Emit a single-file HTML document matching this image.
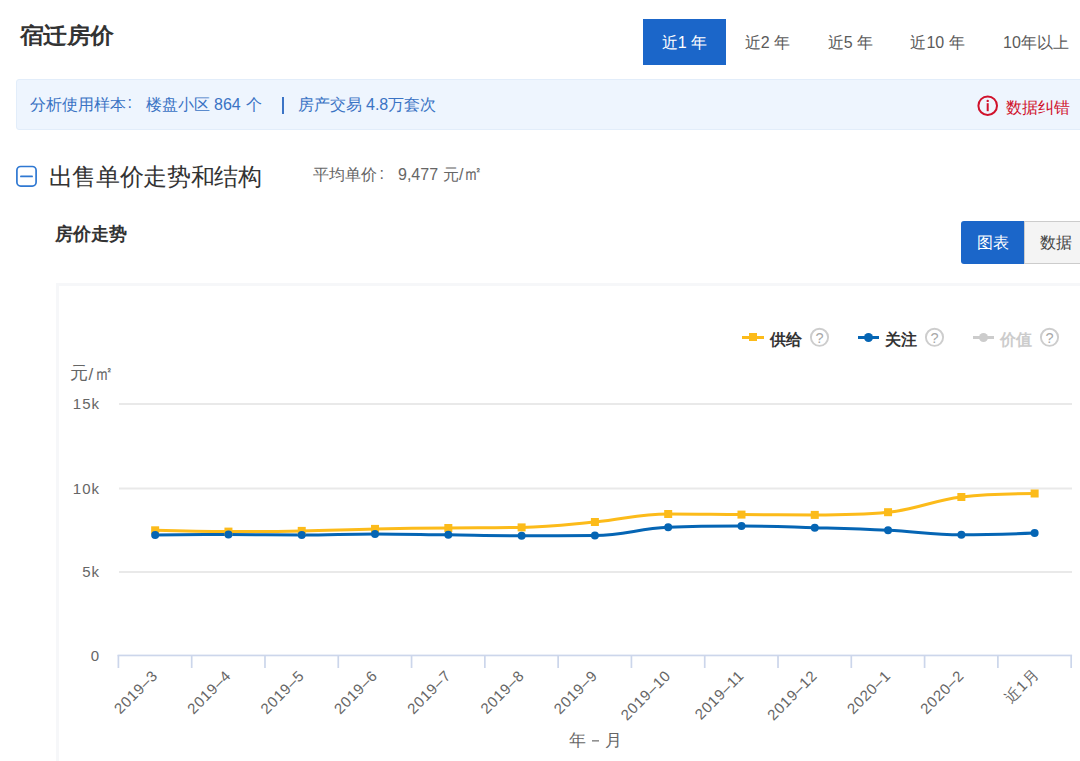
<!DOCTYPE html>
<html><head><meta charset="utf-8"><style>
html,body{margin:0;padding:0;background:#fff;width:1080px;height:761px;overflow:hidden;position:relative;font-family:"Liberation Sans",sans-serif;}
.info{position:absolute;top:97px;font-size:16px;color:#3a73c4;line-height:1;white-space:nowrap}
.a{position:absolute;white-space:nowrap;line-height:1;}
.tab{position:absolute;top:19px;height:46px;line-height:48px;font-size:16px;color:#5a5a5a;text-align:center;}
svg text{font-family:"Liberation Sans",sans-serif;font-size:15px;fill:#666;letter-spacing:0.7px}
svg text.yl{font-size:15px;letter-spacing:1px}
svg text.yt{font-size:15px;letter-spacing:1px}
svg text.xt{font-size:16px;letter-spacing:0}
.q{position:absolute;top:327.8px;width:15.6px;height:15.6px;border:1.8px solid #d0d0d0;border-radius:50%;color:#c4c4c4;font-size:14px;font-weight:bold;line-height:16px;text-align:center}
.lg{position:absolute;top:332px;font-size:16px;font-weight:bold;color:#333;line-height:1}
</style></head><body>
<div class="a" style="left:20px;top:24.5px;font-size:24px;letter-spacing:-0.6px;transform:scaleY(0.92);transform-origin:0 0;font-weight:bold;color:#333">宿迁房价</div>
<div class="tab" style="left:643px;width:83px;top:18.5px;height:46.5px;line-height:48px;background:#1b66c9;color:#fff">近1 年</div>
<div class="tab" style="left:726px;width:83px">近2 年</div>
<div class="tab" style="left:809px;width:83px">近5 年</div>
<div class="tab" style="left:892px;width:91px">近10 年</div>
<div class="tab" style="left:987.5px;width:97px">10年以上</div>
<div style="position:absolute;left:16px;top:79px;width:1080px;height:49px;background:#eef5fe;border:1px solid #e2edfa;border-radius:3px;box-sizing:border-box;height:50.5px"></div>
<div class="info" style="left:30px">分析使用样本</div><div class="info" style="left:127.5px;top:95px">:</div>
<div class="info" style="left:146px">楼盘小区</div>
<div class="info" style="left:214px">864</div>
<div class="info" style="left:246px">个</div>
<div style="position:absolute;left:282px;top:97px;width:2px;height:16.8px;background:#3b74c6"></div>
<div class="info" style="left:297.5px">房产交易</div>
<div class="info" style="left:366px">4.8万套次</div>
<svg style="position:absolute;left:970px;top:88px" width="36" height="36"><circle cx="17.7" cy="17.7" r="9.3" fill="none" stroke="#d0112b" stroke-width="2"/><circle cx="17.7" cy="12.9" r="1.2" fill="#d0112b"/><rect x="16.7" y="15.2" width="2" height="8" fill="#d0112b"/></svg>
<div class="a" style="left:1006px;top:100px;font-size:16px;color:#d0112b">数据纠错</div>
<svg style="position:absolute;left:0;top:150px" width="50" height="50"><rect x="16.9" y="16.5" width="19.2" height="19.6" rx="3.8" fill="none" stroke="#2f78d2" stroke-width="1.7"/><line x1="20.9" y1="26.4" x2="32.1" y2="26.4" stroke="#2f78d2" stroke-width="1.7" stroke-linecap="round"/></svg>

<div class="a" style="left:48.7px;top:165px;font-size:24px;letter-spacing:-0.35px;color:#333">出售单价走势和结构</div>
<div class="a" style="left:313px;top:167px;font-size:16px;color:#666">平均单价</div><div class="a" style="left:379.5px;top:165.5px;font-size:16px;color:#666">:</div><div class="a" style="left:398px;top:167px;font-size:16px;color:#666">9,477</div><div class="a" style="left:443px;top:167px;font-size:16px;color:#666">元/<span style="font-size:20px;line-height:0">㎡</span></div>
<div class="a" style="left:55px;top:225px;font-size:18px;font-weight:bold;color:#333">房价走势</div>
<div style="position:absolute;left:961px;top:221px;width:63px;height:43px;background:#1b66c9;border-radius:3px 0 0 3px;color:#fff;font-size:16px;line-height:44px;text-align:center">图表</div>
<div style="position:absolute;left:1024px;top:221px;width:70px;height:41px;background:#f4f4f4;border:1px solid #ccc;color:#444;font-size:16px;line-height:42px;padding-left:15px;box-sizing:content-box">数据</div>
<div style="position:absolute;left:55.5px;top:283px;width:1100px;height:600px;border:3px solid #f6f7f9;box-sizing:border-box"></div>
<div style="position:absolute;left:742px;top:335.5px;width:22px;height:3px;background:#fcbb1a"></div>
<div style="position:absolute;left:749px;top:333px;width:8px;height:8px;background:#fcbb1a"></div>
<div class="lg" style="left:770px">供给</div><svg style="position:absolute;left:805px;top:322px" width="30" height="30"><circle cx="14.5" cy="15.3" r="8.6" fill="none" stroke="#cdcdcd" stroke-width="1.9"/><text x="14.6" y="20.6" text-anchor="middle" style="font-size:14.5px;fill:#a8a8a8;letter-spacing:0">?</text></svg>
<div style="position:absolute;left:857.5px;top:335.5px;width:21.5px;height:3px;background:#0565b4"></div>
<div style="position:absolute;left:864px;top:332.5px;width:9px;height:9px;background:#0565b4;border-radius:50%"></div>
<div class="lg" style="left:885px">关注</div><svg style="position:absolute;left:920px;top:322px" width="30" height="30"><circle cx="14.5" cy="15.3" r="8.6" fill="none" stroke="#cdcdcd" stroke-width="1.9"/><text x="14.6" y="20.6" text-anchor="middle" style="font-size:14.5px;fill:#a8a8a8;letter-spacing:0">?</text></svg>
<div style="position:absolute;left:972.5px;top:335.5px;width:21.5px;height:3px;background:#ccc"></div>
<div style="position:absolute;left:979px;top:332.5px;width:9px;height:9px;background:#ccc;border-radius:50%"></div>
<div class="lg" style="left:1000px;color:#ccc">价值</div><svg style="position:absolute;left:1035px;top:322px" width="30" height="30"><circle cx="14.5" cy="15.3" r="8.6" fill="none" stroke="#cdcdcd" stroke-width="1.9"/><text x="14.6" y="20.6" text-anchor="middle" style="font-size:14.5px;fill:#a8a8a8;letter-spacing:0">?</text></svg>
<svg style="position:absolute;left:0;top:0" width="1080" height="761">
<rect x="119" y="403" width="953" height="2" fill="#e9e9e9"/>
<rect x="119" y="487.5" width="953" height="2" fill="#e9e9e9"/>
<rect x="119" y="571" width="953" height="2" fill="#e9e9e9"/>
<rect x="117.6" y="654.6" width="954.5" height="1.7" fill="#ccd6eb"/>
<rect x="117.55" y="655" width="1.7" height="13" fill="#ccd6eb"/>
<rect x="190.84" y="655" width="1.7" height="13" fill="#ccd6eb"/>
<rect x="264.13" y="655" width="1.7" height="13" fill="#ccd6eb"/>
<rect x="337.42" y="655" width="1.7" height="13" fill="#ccd6eb"/>
<rect x="410.71" y="655" width="1.7" height="13" fill="#ccd6eb"/>
<rect x="484.00" y="655" width="1.7" height="13" fill="#ccd6eb"/>
<rect x="557.29" y="655" width="1.7" height="13" fill="#ccd6eb"/>
<rect x="630.58" y="655" width="1.7" height="13" fill="#ccd6eb"/>
<rect x="703.87" y="655" width="1.7" height="13" fill="#ccd6eb"/>
<rect x="777.16" y="655" width="1.7" height="13" fill="#ccd6eb"/>
<rect x="850.45" y="655" width="1.7" height="13" fill="#ccd6eb"/>
<rect x="923.74" y="655" width="1.7" height="13" fill="#ccd6eb"/>
<rect x="997.03" y="655" width="1.7" height="13" fill="#ccd6eb"/>
<rect x="1070.32" y="655" width="1.7" height="13" fill="#ccd6eb"/>
<path d="M 155.16 530.30 C 155.16 530.30 199.13 531.60 228.45 531.60 C 257.77 531.60 272.42 531.44 301.74 530.90 C 331.06 530.36 345.71 529.48 375.03 528.90 C 404.35 528.32 419.00 528.30 448.32 528.00 C 477.64 527.70 492.29 528.00 521.61 527.40 C 550.93 526.80 565.58 524.68 594.90 522.00 C 624.22 519.32 638.87 514.00 668.19 514.00 C 697.51 514.00 712.16 514.42 741.48 514.60 C 770.80 514.78 785.45 514.90 814.77 514.90 C 844.09 514.90 858.74 514.90 888.06 512.20 C 917.38 509.50 932.03 500.50 961.35 497.00 C 990.67 493.50 1034.64 493.50 1034.64 493.50" fill="none" stroke="#fcbb1a" stroke-width="3"/>
<path d="M 155.16 534.90 C 155.16 534.90 199.13 534.50 228.45 534.50 C 257.77 534.50 272.42 534.90 301.74 534.90 C 331.06 534.90 345.71 533.90 375.03 533.90 C 404.35 533.90 419.00 534.49 448.32 534.85 C 477.64 535.21 492.29 535.70 521.61 535.70 C 550.93 535.70 565.58 535.70 594.90 535.50 C 624.22 535.30 638.87 528.60 668.19 527.30 C 697.51 526.00 712.16 526.00 741.48 526.00 C 770.80 526.00 785.45 526.84 814.77 527.70 C 844.09 528.56 858.74 528.88 888.06 530.30 C 917.38 531.72 932.03 534.80 961.35 534.80 C 990.67 534.80 1034.64 533.00 1034.64 533.00" fill="none" stroke="#0565b4" stroke-width="3"/>
<rect x="151.16" y="526.30" width="8" height="8" fill="#fcbb1a"/>
<rect x="224.45" y="527.60" width="8" height="8" fill="#fcbb1a"/>
<rect x="297.74" y="526.90" width="8" height="8" fill="#fcbb1a"/>
<rect x="371.03" y="524.90" width="8" height="8" fill="#fcbb1a"/>
<rect x="444.32" y="524.00" width="8" height="8" fill="#fcbb1a"/>
<rect x="517.61" y="523.40" width="8" height="8" fill="#fcbb1a"/>
<rect x="590.90" y="518.00" width="8" height="8" fill="#fcbb1a"/>
<rect x="664.19" y="510.00" width="8" height="8" fill="#fcbb1a"/>
<rect x="737.48" y="510.60" width="8" height="8" fill="#fcbb1a"/>
<rect x="810.77" y="510.90" width="8" height="8" fill="#fcbb1a"/>
<rect x="884.06" y="508.20" width="8" height="8" fill="#fcbb1a"/>
<rect x="957.35" y="493.00" width="8" height="8" fill="#fcbb1a"/>
<rect x="1030.64" y="489.50" width="8" height="8" fill="#fcbb1a"/>
<circle cx="155.16" cy="534.90" r="4" fill="#0565b4"/>
<circle cx="228.45" cy="534.50" r="4" fill="#0565b4"/>
<circle cx="301.74" cy="534.90" r="4" fill="#0565b4"/>
<circle cx="375.03" cy="533.90" r="4" fill="#0565b4"/>
<circle cx="448.32" cy="534.85" r="4" fill="#0565b4"/>
<circle cx="521.61" cy="535.70" r="4" fill="#0565b4"/>
<circle cx="594.90" cy="535.50" r="4" fill="#0565b4"/>
<circle cx="668.19" cy="527.30" r="4" fill="#0565b4"/>
<circle cx="741.48" cy="526.00" r="4" fill="#0565b4"/>
<circle cx="814.77" cy="527.70" r="4" fill="#0565b4"/>
<circle cx="888.06" cy="530.30" r="4" fill="#0565b4"/>
<circle cx="961.35" cy="534.80" r="4" fill="#0565b4"/>
<circle cx="1034.64" cy="533.00" r="4" fill="#0565b4"/>
<text x="158.66" y="676.5" text-anchor="end" transform="rotate(-45 158.66 676.5)">2019–3</text>
<text x="231.95" y="676.5" text-anchor="end" transform="rotate(-45 231.95 676.5)">2019–4</text>
<text x="305.24" y="676.5" text-anchor="end" transform="rotate(-45 305.24 676.5)">2019–5</text>
<text x="378.53" y="676.5" text-anchor="end" transform="rotate(-45 378.53 676.5)">2019–6</text>
<text x="451.82" y="676.5" text-anchor="end" transform="rotate(-45 451.82 676.5)">2019–7</text>
<text x="525.11" y="676.5" text-anchor="end" transform="rotate(-45 525.11 676.5)">2019–8</text>
<text x="598.40" y="676.5" text-anchor="end" transform="rotate(-45 598.40 676.5)">2019–9</text>
<text x="671.69" y="676.5" text-anchor="end" transform="rotate(-45 671.69 676.5)">2019–10</text>
<text x="744.98" y="676.5" text-anchor="end" transform="rotate(-45 744.98 676.5)">2019–11</text>
<text x="818.27" y="676.5" text-anchor="end" transform="rotate(-45 818.27 676.5)">2019–12</text>
<text x="891.56" y="676.5" text-anchor="end" transform="rotate(-45 891.56 676.5)">2020–1</text>
<text x="964.85" y="676.5" text-anchor="end" transform="rotate(-45 964.85 676.5)">2020–2</text>
<text x="1039.64" y="675" text-anchor="end" transform="rotate(-45 1039.64 675)">近1月</text>
<text class="yl" x="100" y="409.4" text-anchor="end">15k</text>
<text class="yl" x="100" y="493.59999999999997" text-anchor="end">10k</text>
<text class="yl" x="100" y="577.4" text-anchor="end">5k</text>
<text class="yl" x="100" y="660.8" text-anchor="end">0</text>
<text class="yt" x="70" y="378.5" style="font-size:17.5px;letter-spacing:0">元</text><text class="yt" x="88.5" y="379.5" style="font-size:17px;letter-spacing:0">/</text><text class="yt" x="93.5" y="379.5" style="font-size:19.5px;letter-spacing:0">㎡</text>
<text class="xt" x="569.3" y="746.3" style="font-size:17px">年</text><rect x="592" y="740.2" width="7" height="1.3" fill="#777"/><text class="xt" x="604.5" y="746.3" style="font-size:17px">月</text>
</svg>
</body></html>
